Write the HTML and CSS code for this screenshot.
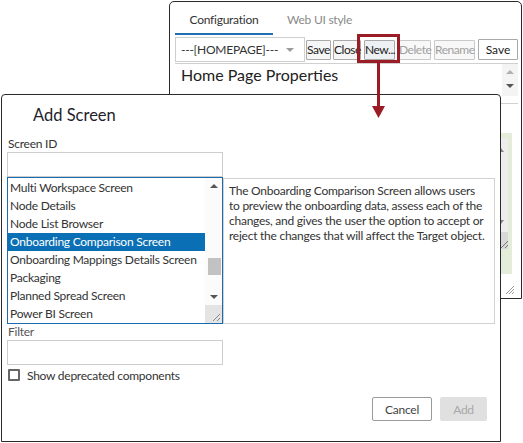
FILE: index.html
```html
<!DOCTYPE html>
<html>
<head>
<meta charset="utf-8">
<link rel="stylesheet" href="styles.css">
</head>
<body>
<div class="bgwin">
  <div class="tabs">
    <div class="tab active">Configuration</div>
    <div class="tab">Web UI style</div>
  </div>
  <div class="toolbar">
    <div class="select"><span>---[HOMEPAGE]---</span><span class="caret"></span></div>
    <button class="tb w-save">Save</button>
    <button class="tb w-close">Close</button>
    <button class="tb w-new">New...</button>
    <button class="tb w-del dis">Delete</button>
    <button class="tb w-ren dis">Rename</button>
    <button class="tb w-save2">Save</button>
  </div>
  <div class="props">
    <div class="props-head">
      <div class="props-title">Home Page Properties</div>
      <div class="props-scroll">
        <span class="arr up dim"></span>
        <span class="arr down"></span>
      </div>
    </div>
    <div class="props-sep"></div>
    <div class="green">
      <div class="ta">
        <span class="arr up small"></span>
        <span class="arr down small"></span>
        <span class="ta-grip">
          <svg width="7" height="17" viewBox="0 0 7 17"><path d="M7 9 L0 16 M7 13 L4 16" stroke="#777" stroke-width="1"/></svg>
        </span>
      </div>
    </div>
    <div class="win-grip">
      <svg width="11" height="11" viewBox="0 0 11 11"><path d="M10 2 L2 10 M10 5 L5 10 M10 8 L8 10" stroke="#9a9a9a" stroke-width="1"/></svg>
    </div>
  </div>
</div>

<div class="dialog">
  <div class="dlg-title">Add Screen</div>
  <label class="lbl">Screen ID</label>
  <div class="input"></div>
  <div class="pick">
    <div class="list">
      <div class="items">
        <div class="item">Multi Workspace Screen</div>
        <div class="item">Node Details</div>
        <div class="item">Node List Browser</div>
        <div class="item sel">Onboarding Comparison Screen</div>
        <div class="item">Onboarding Mappings Details Screen</div>
        <div class="item">Packaging</div>
        <div class="item">Planned Spread Screen</div>
        <div class="item">Power BI Screen</div>
      </div>
      <div class="vscroll">
        <div class="sbtn"><span class="arr up"></span></div>
        <div class="track"><div class="thumb"></div></div>
        <div class="sbtn"><span class="arr down"></span></div>
        <div class="corner">
          <svg width="11" height="11" viewBox="0 0 11 11"><path d="M10 3 L3 10 M10 7 L7 10" stroke="#8a8a8a" stroke-width="1"/></svg>
        </div>
      </div>
    </div>
    <div class="desc">The Onboarding Comparison Screen allows users to preview the onboarding data, assess each of the changes, and gives the user the option to accept or reject the changes that will affect the Target object.</div>
  </div>
  <label class="lbl filter-lbl">Filter</label>
  <div class="input"></div>
  <div class="check-row">
    <span class="check"></span>
    <span>Show deprecated components</span>
  </div>
  <div class="actions">
    <button class="btn cancel">Cancel</button>
    <button class="btn add">Add</button>
  </div>
</div>

<svg class="annot" width="523" height="443" viewBox="0 0 523 443">
  <rect x="358.5" y="35.5" width="40" height="26" fill="none" stroke="#9b1c24" stroke-width="3"/>
  <rect x="377" y="63" width="3" height="45" fill="#9b1c24"/>
  <path d="M372 106 L385 106 L378.5 118 Z" fill="#9b1c24"/>
</svg>
</body>
</html>
```
FILE: styles.css
```css
* { box-sizing: border-box; }
body {
  margin: 0;
  width: 523px;
  height: 443px;
  position: relative;
  overflow: hidden;
  background: #fff;
  font-family: Lato, "Open Sans", sans-serif;
  font-size: 12px;
  letter-spacing: -0.25px;
  color: #333;
}

/* generic arrows */
.arr { display: block; width: 0; height: 0; border-left: 4px solid transparent; border-right: 4px solid transparent; }
.arr.up { border-bottom: 4px solid #555; }
.arr.down { border-top: 4px solid #555; }
.arr.up.dim { border-bottom-color: #b0b0b0; }

/* background window */
.bgwin {
  position: absolute;
  left: 169px;
  top: 1px;
  width: 353px;
  height: 298px;
  border: 1px solid #2a2a2a;
  border-radius: 5px 5px 0 0;
  background: #fff;
}
.tabs { display: flex; padding-left: 5px; height: 33px; }
.tab { padding: 5px 0 0; line-height: 26px; color: #8a8a8a; font-size: 12px; }
.tab.active { width: 98px; text-align: center; color: #333; border-bottom: 2px solid #1f6fb2; }
.tab + .tab { margin-left: 14px; }

.toolbar { display: flex; align-items: center; padding-left: 5px; margin-top: 2px; height: 25px; }
.select {
  width: 130px; height: 25px; border: 1px solid #cfcfcf; display: flex; align-items: center;
  justify-content: space-between; padding: 0 10px 0 5px; color: #333; font-size: 12px; margin-right: 1px;
}
.caret { width: 0; height: 0; border-left: 4px solid transparent; border-right: 4px solid transparent; border-top: 4px solid #9c9c9c; }
.tb {
  height: 20px; padding: 0; margin: 0 2px 0 0; border: 1px solid #a9a9a9; background: #f6f6f6;
  font-family: inherit; font-size: 12px; letter-spacing: -0.45px; color: #222; border-radius: 1px; white-space: nowrap; text-align: center;
}
.tb.dis { color: #a0a0a0; border-color: #c9c9c9; background: #f8f8f8; }
.w-save { width: 25px; }
.w-close { width: 28px; margin-right: 3px; }
.w-new { width: 31px; background: #eef1f4; margin-right: 3px; }
.w-del { width: 33px; margin-right: 3px; }
.w-ren { width: 41px; margin-right: 3px; }
.w-save2 { width: 40px; height: 21px; background: #fff; letter-spacing: 0; }

.props { margin: 1px 3px 0 5px; border-top: 1px solid #d0d0d0; position: relative; height: 234px; }
.props-head { display: flex; justify-content: space-between; height: 32px; }
.props-title { font-size: 16px; letter-spacing: 0; color: #222; padding: 0 0 0 6px; line-height: 22px; }
.props-scroll { width: 16px; background: #f4f4f4; display: flex; flex-direction: column; align-items: center; gap: 10px; padding-top: 6px; }
.props-sep { height: 1px; background: #d0d0d0; margin: 7px 0 0; }
.green { margin: 29px 6px 0 250px; height: 141px; background: #e3edda; padding-top: 5px; }
.ta { margin-left: 76px; width: 7px; height: 111px; background: #ededed; position: relative; }
.ta .small { border-left-width: 3px; border-right-width: 3px; position: absolute; left: -3px; }
.ta .up { top: 10px; border-bottom-color: #888; }
.ta .down { top: 82px; border-top-color: #888; }
.ta-grip { position: absolute; left: 0; bottom: 0; width: 7px; height: 17px; background: #d8d8d8; }
.ta-grip svg { display: block; }
.win-grip { position: absolute; right: 3px; bottom: 2px; width: 11px; height: 11px; }
.win-grip svg { display: block; }

/* dialog */
.dialog {
  position: absolute;
  left: 1px;
  top: 94px;
  width: 500px;
  height: 348px;
  border: 1px solid #2a2a2a;
  border-radius: 4px 4px 0 0;
  background: #fff;
  padding: 0 5px;
  display: flex;
  flex-direction: column;
}
.dlg-title { font-size: 16.5px; letter-spacing: 0; color: #1e1e2a; margin: 8px 0 0 26px; line-height: 24px; }
.lbl { display: block; margin: 9px 0 0 1px; line-height: 16px; color: #333; }
.filter-lbl { margin-top: 0; color: #555; }
.input { width: 216px; height: 25px; border: 1px solid #cdcdcd; margin-top: 0; background: #fff; flex: none; }
.pick { display: flex; align-items: flex-start; }
.list {
  width: 216px; height: 147px; border: 1px solid #1b6cae; display: flex; flex: none;
}
.items { flex: 1; padding-top: 1px; overflow: hidden; }
.item { height: 18px; line-height: 18px; padding-left: 2px; white-space: nowrap; overflow: hidden; color: #333; }
.item.sel { background: #0a6fb4; color: #fff; }
.vscroll { width: 17px; display: flex; flex-direction: column; background: #fbfbfb; }
.sbtn { height: 16px; display: flex; align-items: center; justify-content: center; }
.track { height: 95px; position: relative; }
.thumb { position: absolute; left: 3px; right: 1px; top: 64px; height: 17px; background: #c2c2c2; }
.corner { height: 18px; background: #e4e4e4; position: relative; }
.corner svg { position: absolute; right: 1px; bottom: 1px; display: block; }
.desc {
  width: 272px; height: 146px; margin-top: 1px; border: 1px solid #d2d2d2;
  padding: 4px 6px 0 5px; line-height: 15px; color: #333; flex: none;
}
.check-row { display: flex; align-items: center; margin: 4px 0 0 1px; height: 12px; gap: 7px; }
.check { width: 12px; height: 12px; border: 2px solid #666; border-radius: 1px; }
.actions { display: flex; justify-content: flex-end; gap: 8px; margin: 16px 8px 0 0; }
.btn { height: 24px; font-family: inherit; font-size: 12px; padding: 0; border-radius: 2px; letter-spacing: -0.25px; }
.cancel { width: 60px; background: #fff; border: 1px solid #9a9a9a; color: #444; }
.add { width: 47px; background: #e0e0e0; border: 1px solid #e0e0e0; color: #a8a8a8; }

.annot { position: absolute; left: 0; top: 0; pointer-events: none; }
```
